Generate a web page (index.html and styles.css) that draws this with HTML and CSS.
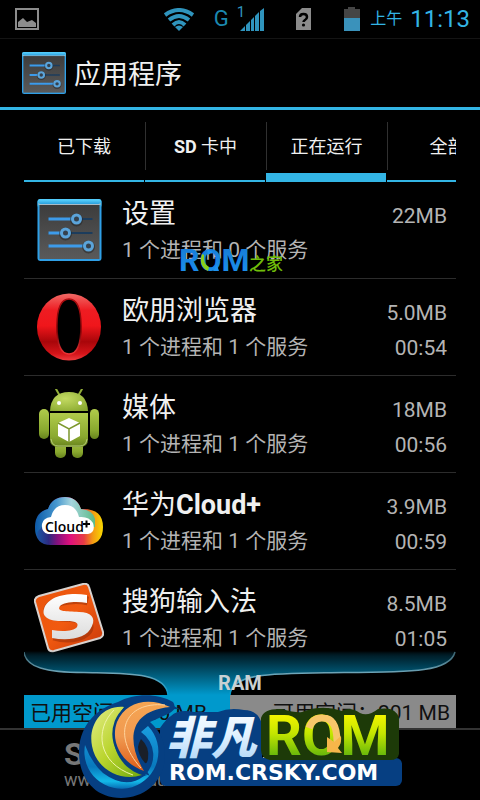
FILE: index.html
```html
<!DOCTYPE html>
<html lang="zh-CN">
<head>
<meta charset="utf-8">
<meta name="viewport" content="width=device-width, initial-scale=1">
<title>应用程序</title>
<link rel="stylesheet" href="styles.css">
</head>
<body>
<svg class="defs" aria-hidden="true">
  <defs>
    <linearGradient id="gTop" x2="0" y2="1"><stop stop-color="#55cdfb"/><stop offset="1" stop-color="#2a9fdc"/></linearGradient>
    <linearGradient id="gPanel" x2="0" y2="1"><stop stop-color="#3c3c3c"/><stop offset="1" stop-color="#5a5a5a"/></linearGradient>
    <symbol id="sliders" viewBox="0 0 64 62">
      <rect x="0" y="0" width="64" height="62" rx="3" fill="#2f9fe6"/>
      <rect x="0" y="0" width="64" height="9" rx="3" fill="url(#gTop)"/>
      <rect x="2" y="5" width="60" height="55" fill="url(#gPanel)"/>
      <rect x="1" y="4" width="62" height="2" fill="#a8bcc8"/>
      <rect x="1" y="1" width="62" height="4" rx="2" fill="url(#gTop)"/>
      <path d="M11 20H55M11 34H55M11 47H55" stroke="#1c3c5c" stroke-width="2"/>
      <path d="M11 20H35M11 34H24M11 47H47" stroke="#3d9bea" stroke-width="3"/>
      <g fill="#35414d" stroke="#222" stroke-opacity=".5" stroke-width="5"><circle cx="39" cy="21" r="4"/><circle cx="28" cy="35" r="4"/><circle cx="51" cy="48" r="4"/></g>
      <g fill="#35414d" stroke="#5ba4da" stroke-width="3"><circle cx="39" cy="20" r="4"/><circle cx="28" cy="34" r="4"/><circle cx="51" cy="47" r="4"/></g>
    </symbol>
  </defs>
</svg>

<div class="screen">
  <header>
    <div class="status">
      <svg class="s-pic" width="24" height="22" viewBox="0 0 24 22"><rect x="1" y="1" width="22" height="20" fill="none" stroke="#8c8c8c" stroke-width="2"/><path d="M3 19V14L8 10L12 14L17 12L21 15V19Z" fill="#8c8c8c"/></svg>
      <svg class="s-wifi" width="30" height="23" viewBox="0 0 30 23"><g fill="none" stroke="#2f94bd" stroke-width="4"><path d="M1 7Q15-3 29 7"/><path d="M5 12Q15 4 25 12"/><path d="M9 17Q15 11 21 17"/></g><path d="M11 19Q15 16 19 19L15 23Z" fill="#2f94bd"/></svg>
      <span class="s-g">G</span>
      <span class="s-one">1</span>
      <svg class="s-sig" width="24" height="23" viewBox="0 0 24 23"><path d="M0 23L5 18V23ZM6 23V17L10 13V23ZM11 23V12L14 9V23ZM15 23V8L19 4V23ZM20 23V3L24 0V23Z" fill="#2f94bd"/></svg>
      <svg class="s-sim" width="16" height="22" viewBox="0 0 16 22"><path d="M0 6L6 0H15V22H0Z" fill="#8b8b8b"/><path d="M4 9Q4 6 7.500 6Q11 6 11 9Q11 11 9 12Q7.500 13 7.500 14" fill="none" stroke="#000" stroke-width="2.500"/><circle cx="7.500" cy="17" r="1.600"/></svg>
      <svg class="s-bat" width="16" height="24" viewBox="0 0 16 24"><path d="M0 2H4V0H11V2H16V12H0Z" fill="#454545"/><rect y="11" width="16" height="13" fill="#3a92bb"/></svg>
      <span class="s-ampm">上午</span>
      <time class="s-time">11:13</time>
    </div>
    <div class="bar">
      <svg width="44" height="42" viewBox="0 0 64 62" preserveAspectRatio="none"><use href="#sliders"/></svg>
      <h1>应用程序</h1>
    </div>
  </header>

  <nav class="tabs">
    <button type="button"><span>已下载</span></button>
    <button type="button"><span><b>SD</b> 卡中</span></button>
    <button type="button" class="active"><span>正在运行</span></button>
    <button type="button"><span>全部</span></button>
  </nav>

  <main>
    <ul class="apps">
      <li>
        <svg class="icon" viewBox="0 0 70 70"><use href="#sliders" x="3" y="4" width="65" height="62"/></svg>
        <div class="info"><h2>设置</h2><p>1 个进程和 0 个服务</p></div>
        <div class="nums"><span>22MB</span></div>
        <svg class="mark" viewBox="0 0 108 30">
          <defs><linearGradient id="mk" x2="0" y2="1"><stop stop-color="#1578d2"/><stop offset="1" stop-color="#1d93f0"/></linearGradient></defs>
          <text class="mark-rom" x="-1" y="25" fill="url(#mk)">ROM</text>
          <path d="M22 8Q18 20 28 25L29 21Q23 18 24 9Z" fill="#8ccf1a"/>
          <path d="M27 3L33 6L28 9M33 25L37 19L39 25" fill="#1d93f0"/>
          <text class="mark-zh" x="69" y="24">之家</text>
        </svg>
      </li>
      <li>
        <svg class="icon" viewBox="0 0 70 70">
          <defs><linearGradient id="op" x2="0" y2="1"><stop stop-color="#f06a66"/><stop offset=".25" stop-color="#ee1c22"/><stop offset=".48" stop-color="#f0161b"/><stop offset=".72" stop-color="#a8060a"/><stop offset=".9" stop-color="#d51419"/><stop offset="1" stop-color="#ef3d40"/></linearGradient>
          <linearGradient id="oi" x2="0" y2="1"><stop stop-color="#b00d10"/><stop offset=".6" stop-color="#760205"/><stop offset="1" stop-color="#ef3437"/></linearGradient></defs>
          <ellipse cx="35" cy="35" rx="32" ry="33.500" fill="url(#op)"/>
          <path d="M35 7C45 7 47 20 47 34S45 62 35 62S23 48 23 34S25 7 35 7Z" fill="#000" stroke="url(#oi)" stroke-width="1.500"/>
        </svg>
        <div class="info"><h2>欧朋浏览器</h2><p>1 个进程和 1 个服务</p></div>
        <div class="nums"><span>5.0MB</span><span>00:54</span></div>
      </li>
      <li>
        <svg class="icon" viewBox="0 0 70 70">
          <defs><linearGradient id="an" x2="0" y2="1"><stop stop-color="#b0cb4b"/><stop offset=".7" stop-color="#8aa92f"/><stop offset="1" stop-color="#67831d"/></linearGradient>
          <radialGradient id="hd" cx=".4" cy=".35" r=".8"><stop stop-color="#c3da62"/><stop offset="1" stop-color="#88a82e"/></radialGradient></defs>
          <path d="M22 0L26 7M48 0L44 7" stroke="#91ad38" stroke-width="2" stroke-linecap="round"/>
          <g fill="url(#an)"><rect x="5" y="20" width="10" height="30" rx="5"/><rect x="56" y="20" width="9" height="30" rx="4.500"/><rect x="21" y="48" width="11" height="21" rx="5"/><rect x="38" y="48" width="11" height="21" rx="5"/><path d="M16 24H54V50Q54 58 46 58H24Q16 58 16 50Z"/></g>
          <path d="M16 22Q17 3 35 3T54 22Z" fill="url(#hd)"/>
          <circle cx="25" cy="14" r="2" fill="#fff"/><circle cx="46" cy="14" r="2" fill="#fff"/>
          <path d="M17 50Q18 57 24 57H46Q52 57 53 50" fill="none" stroke="#b6cb79" stroke-width="1"/>
          <path d="M35 29L46 34V47L35 53L24 47V34Z" fill="#fff"/><path d="M24 34L35 40L46 34M35 40V53" fill="none" stroke="#7c972d" stroke-width="1.500"/>
        </svg>
        <div class="info"><h2>媒体</h2><p>1 个进程和 1 个服务</p></div>
        <div class="nums"><span>18MB</span><span>00:56</span></div>
      </li>
      <li>
        <svg class="icon" viewBox="0 0 70 70">
          <defs><linearGradient id="c1"><stop stop-color="#155eab"/><stop offset=".2" stop-color="#2d2a80"/><stop offset=".33" stop-color="#85117e"/><stop offset=".52" stop-color="#e0117c"/><stop offset=".72" stop-color="#e73c45"/><stop offset=".85" stop-color="#f39a13"/><stop offset="1" stop-color="#f9d900"/></linearGradient>
          <linearGradient id="c2"><stop stop-color="#0d5ca9"/><stop offset=".35" stop-color="#4697cf"/><stop offset=".6" stop-color="#a5d5de"/><stop offset="1" stop-color="#5dbb86"/></linearGradient></defs>
          <path d="M17 59Q1 59 1 41Q1 26 14 23Q18 11 31 11Q43 11 47 23Q69 22 69 41Q69 59 51 59Z" fill="url(#c1)"/>
          <path d="M2 49Q-1 27 14 23Q18 11 31 11Q43 11 47 23Q59 24 61 33V41H8Q4 44 2 49Z" fill="url(#c2)"/>
          <path d="M14 48Q7 46 8 38Q9 32 17 31Q20 19 31 19Q42 19 45 31Q55 30 59 37Q62 46 54 48Z" fill="#fff"/>
          <text class="cloud" x="11" y="46">Cloud</text><path d="M49 38H56M52.500 34.500V41.500" stroke="#000" stroke-width="2"/>
        </svg>
        <div class="info"><h2>华为<b>Cloud+</b></h2><p>1 个进程和 1 个服务</p></div>
        <div class="nums"><span>3.9MB</span><span>00:59</span></div>
      </li>
      <li>
        <svg class="icon" viewBox="0 0 70 70">
          <defs><linearGradient id="so" x2="1" y2="1"><stop stop-color="#e8540c"/><stop offset=".5" stop-color="#f15a10"/><stop offset="1" stop-color="#c7370a"/></linearGradient><linearGradient id="ss" x2="0" y2="1"><stop stop-color="#fff"/><stop offset="1" stop-color="#dcdcdc"/></linearGradient></defs>
          <path d="M5 13L49 1Q54 0 55 4L69 49Q70 53 66 55L20 68Q15 69 14 65L1 19Q0 15 5 13Z" fill="url(#so)" stroke="#d8d2cf" stroke-width="2"/>
          <path d="M54 18C39 14 13 19 14 28C15 39 54 29 55 43C56 53 36 58 20 53" fill="none" stroke="#8f2c08" stroke-opacity=".5" stroke-width="9"/>
          <path d="M53 12V20C43 18 30 19 26 23C22 29 32 28 45 29C57 29 62 35 58 43C53 56 34 58 18 55V47C29 49 40 48 43 44C46 38 37 38 27 38C12 38 8 32 10 26C14 13 34 9 53 12Z" fill="url(#ss)"/>
        </svg>
        <div class="info"><h2>搜狗输入法</h2><p>1 个进程和 1 个服务</p></div>
        <div class="nums"><span>8.5MB</span><span>01:05</span></div>
      </li>
    </ul>

    <section class="ram">
      <div class="funnel">
        <svg viewBox="0 0 432 43" preserveAspectRatio="none" aria-hidden="true">
          <defs><linearGradient id="fu" x2="0" y2="1"><stop stop-color="#003a50" stop-opacity="0"/><stop offset=".15" stop-color="#002431"/><stop offset=".5" stop-color="#005673"/><stop offset="1" stop-color="#0099cc"/></linearGradient>
          <linearGradient id="ln" x2="0" y2="1"><stop stop-color="#3b6471"/><stop offset=".5" stop-color="#6fa6b9"/><stop offset="1" stop-color="#0099cc"/></linearGradient></defs>
          <path d="M0 0C2 16 22 21 60 21C100 22 142 20 144 43H206C207 20 255 22 320 21C390 21 426 20 432 0Z" fill="url(#fu)"/>
          <path d="M0 1C2 16 22 21 60 21C100 22 142 20 144 43M206 43C207 20 255 22 320 21C390 21 426 20 431 1" fill="none" stroke="url(#ln)" stroke-width="1.500"/>
        </svg>
        <strong>RAM</strong>
      </div>
      <div class="usage"><span class="used">已用空间<i>：</i>180 MB</span><span class="free">可用空间<i>：</i>201 MB</span></div>
    </section>
  </main>

  <footer>
    <div class="site"><b>SHENDU</b><span>www.shendu.com</span></div>
    <button type="button">显示缓存进程</button>
    <svg class="logo" viewBox="76 690 330 110" role="img" aria-label="非凡ROM ROM.CRSKY.COM">
      <defs>
        <linearGradient id="ri" x2="0" y2="1"><stop stop-color="#1a9ee0"/><stop offset=".65" stop-color="#0879bd"/><stop offset=".88" stop-color="#13b9e8"/><stop offset="1" stop-color="#086bb3"/></linearGradient>
        <linearGradient id="gr" x2="1" y2="1"><stop stop-color="#e4ed89"/><stop offset=".5" stop-color="#b9d42c"/><stop offset="1" stop-color="#6fa90e"/></linearGradient>
        <linearGradient id="or" x2="0" y2="1"><stop stop-color="#f6a552"/><stop offset=".5" stop-color="#f09a51"/><stop offset="1" stop-color="#dc5b16"/></linearGradient>
        <linearGradient id="zh" x2="0" y2="1"><stop stop-color="#fff"/><stop offset=".5" stop-color="#e2f2ff"/><stop offset="1" stop-color="#a7d2f7"/></linearGradient>
        <linearGradient id="rm" gradientUnits="userSpaceOnUse" x1="0" y1="714" x2="0" y2="757"><stop stop-color="#f5f500"/><stop offset=".45" stop-color="#c4e600"/><stop offset="1" stop-color="#62b50c"/></linearGradient>
      </defs>
      <rect x="160" y="758" width="242" height="28" rx="6" fill="#063f82"/>
      <path d="M171 716Q178 709 194 712L218 712Q230 707 244 710Q258 710 262 724V768H160V728Q167 718 171 716Z" fill="#063f82"/>
      <path d="M261 718Q264 708 282 709Q296 713 302 712Q322 704 342 711Q350 706 360 713Q368 717 378 709Q396 706 399 718V754Q398 760 390 760H270Q261 758 261 750Z" fill="#1d3a08"/>
      <path d="M118 702C134 693 158 693 173 702Q178 709 168 714L150 722Q165 735 165 755C165 780 146 798 121 798C94 798 78 777 79 750C80 724 98 708 118 702Z" fill="#063f82"/>
      <path d="M85 745A37 37 0 1 0 148 726L141 732A28 28 0 0 1 144 776Q126 790 103 773Q91 762 85 745Z" fill="url(#ri)"/>
      <path d="M141 739Q150 747 148 759Q147 764 145 763Q138 755 138 747Q139 742 141 739Z" fill="#1a1f28"/>
      <path d="M124 707C101 705 88 726 92 746C96 769 120 782 142 775C116 767 103 735 124 707Z" fill="url(#gr)" stroke="#063f82" stroke-width="3" paint-order="stroke"/>
      <path d="M114 710C94 730 98 763 133 775" fill="none" stroke="#eff4a8" stroke-width="1"/>
      <path d="M170 707C149 697 126 701 117 722C110 741 121 763 144 771C127 743 127 711 170 707Z" fill="url(#or)" stroke="#063f82" stroke-width="5" paint-order="stroke"/>
      <path d="M165 705C124 701 111 735 141 768" fill="none" stroke="#ffd39c" stroke-width="1"/>
      <text class="logo-zh" x="166" y="754" fill="url(#zh)">非凡</text>
      <text class="logo-rom" x="266" y="755" fill="url(#rm)">ROM</text>
      <path d="M309 728Q313 717 323 718Q337 718 337 742" fill="none" stroke="#f7c66a" stroke-width="7"/>
      <path d="M327 737L327 752L342 753L338 748Q342 743 341 736L334 742Z" fill="#f6b64a"/>
      <text class="logo-url" x="169" y="780">ROM.CRSKY.COM</text>
    </svg>
  </footer>
</div>
</body>
</html>
```
FILE: styles.css
```css
* { box-sizing: border-box; }
body, h1, h2, p, ul { margin: 0; padding: 0; }
body {
  background: #000;
  color: #f0f0f0;
  font-family: Roboto, "Noto Sans CJK SC", sans-serif;
}
button {
  border: 0;
  margin: 0;
  background: none;
  color: inherit;
  font: inherit;
}
svg { display: block; flex: none; }
.defs { position: absolute; width: 0; height: 0; }
.screen {
  min-height: 100vh;
  display: flex;
  flex-direction: column;
  overflow: hidden;
}

.status {
  display: flex;
  align-items: center;
  height: 39px;
  padding: 0 10px 0 15px;
  border-bottom: 1px solid #141414;
  color: #33b5e5;
  line-height: 36px;
}
.s-wifi { margin-left: auto; }
.s-g { margin-left: 20px; font-size: 22px; color: #1b88b0; }
.s-one { align-self: flex-start; margin-left: 8px; font-size: 15px; line-height: 24px; color: #2f94bd; }
.s-sig { margin-left: -5px; }
.s-sim { margin-left: 32px; }
.s-bat { margin-left: 32px; }
.s-ampm { margin-left: 10px; font-size: 16px; line-height: 40px; }
.s-time { margin-left: 8px; font-size: 24px; }

.bar {
  display: flex;
  align-items: center;
  gap: 8px;
  height: 71px;
  padding: 0 21px 0 22px;
  border-bottom: 3px solid #33b5e5;
}
h1 { padding-top: 3px; font-size: 27px; font-weight: 400; line-height: 36px; }

.tabs {
  display: flex;
  gap: 1px;
  height: 72px;
  margin: 0 24px;
  overflow: hidden;
}
.tabs button {
  display: flex;
  flex: 0 0 120px;
  align-items: flex-start;
  justify-content: center;
  height: 72px;
  padding: 12px 0 0;
  border-bottom: 2px solid #33b5e5;
  font-size: 18px;
}
.tabs .active { border-bottom-width: 9px; }
.tabs span {
  flex: 1;
  height: 48px;
  line-height: 50px;
}
.tabs button + button span { border-left: 1px solid #303030; }

main { padding: 0 24px; }
.apps { list-style: none; }
.apps li {
  position: relative;
  display: flex;
  height: 97px;
  padding: 15px 9px 9px 10px;
  border-bottom: 1px solid #2c2c2c;
}
.apps li:last-child { border: 0; }
.icon { width: 70px; height: 70px; margin: -2px 18px 0 0; }
.info { flex: 1; }
h2 { font-size: 27px; font-weight: 400; line-height: 35px; }
.info p { font-size: 21px; line-height: 36px; color: #b4b4b4; white-space: nowrap; }
.nums {
  display: flex;
  flex-direction: column;
  align-items: flex-end;
  padding-top: 2px;
  font-size: 21px;
  line-height: 35px;
  color: #b4b4b4;
}
.mark { position: absolute; left: 156px; top: 64px; width: 108px; height: 30px; }
.mark-rom { font: bold 32px Roboto, sans-serif; }
.mark-zh { font: 500 17px "Noto Sans CJK SC", sans-serif; fill: #70bd0a; }
.cloud { font: 600 14px "Open Sans", sans-serif; }

.ram { position: relative; margin-top: -16px; }
.funnel { position: relative; height: 44px; }
.funnel svg { width: 100%; height: 44px; }
.funnel strong {
  position: absolute;
  inset: 20px 0 0;
  text-align: center;
  font-size: 20px;
  line-height: 24px;
  color: #c9d0d3;
}
.usage {
  display: flex;
  height: 33px;
  font-size: 21px;
  line-height: 33px;
  color: #101010;
  white-space: nowrap;
}
.usage i { font-family: "Noto Sans CJK TC", sans-serif; font-style: normal; }
.used { flex: 206; padding-left: 6px; background: #0099cc; }
.free { flex: 226; padding-right: 6px; background: #8a8a8a; text-align: right; }

footer {
  position: relative;
  flex: 1;
  min-height: 72px;
  display: flex;
  align-items: center;
  justify-content: center;
  border-top: 2px solid #333;
}
footer button { font-size: 21px; }
.site {
  position: absolute;
  left: 64px;
  top: 8px;
  display: flex;
  flex-direction: column;
  color: #777;
  font-size: 18px;
  line-height: 20px;
}
.site b { font-size: 32px; line-height: 32px; }
.logo { position: absolute; left: 76px; bottom: 0; width: 330px; height: 110px; }
.logo-zh { font: italic 900 45px "Noto Sans CJK SC", sans-serif; }
.logo-rom { font: bold 56px Roboto, sans-serif; }
.logo-url { font: bold 22px "DejaVu Sans", sans-serif; fill: #fff; }
```
